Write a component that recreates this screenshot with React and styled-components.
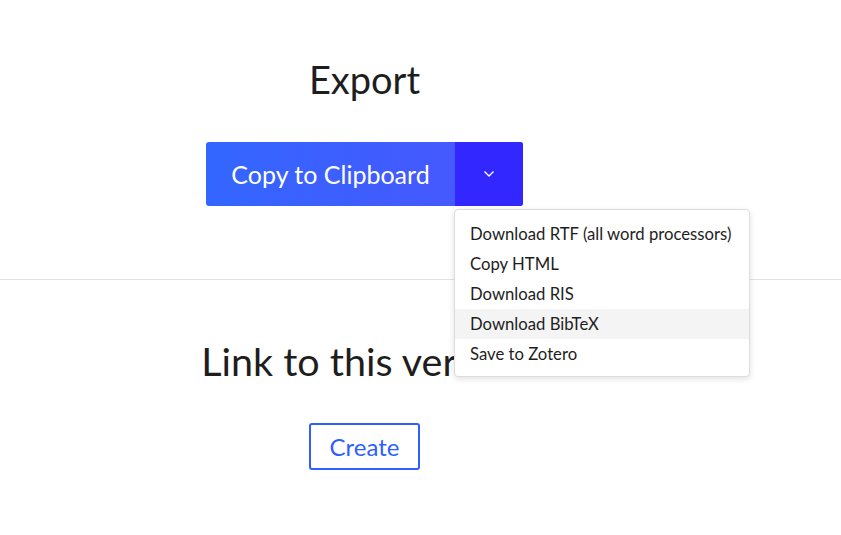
import React from "react";
import styled, { createGlobalStyle } from "styled-components";

const Global = createGlobalStyle`
  html, body { margin: 0; padding: 0; background: #fff; }
  body { font-family: Lato, "Noto Sans", sans-serif; color: #222; }
`;

const Page = styled.div`
  width: 841px;
  height: 535px;
  overflow: hidden;
  position: relative;
`;

const Section = styled.section`
  width: 729px;
  display: flex;
  flex-direction: column;
  align-items: center;
  padding-top: ${(p) => p.$top}px;
  padding-bottom: ${(p) => p.$bottom}px;
`;

const Heading = styled.h2`
  margin: 0;
  font-family: Lato, sans-serif;
  font-weight: 400;
  font-size: ${(p) => p.$size || 38}px;
  line-height: 46px;
  color: #1e1e1e;
`;

const Divider = styled.hr`
  margin: 0;
  border: 0;
  border-top: 1px solid #e2e2e2;
  width: 100%;
`;

const SplitWrap = styled.div`
  position: relative;
  margin-top: 40px;
`;

const Split = styled.div`
  display: flex;
  height: 64px;
  border-radius: 3px;
  overflow: hidden;
  background: linear-gradient(90deg, #3366ff 0%, #4a55ff 100%);
`;

const MainButton = styled.button`
  border: 0;
  background: transparent;
  color: #fff;
  font-family: Lato, sans-serif;
  font-size: 25px;
  font-weight: 400;
  width: 249px;
  padding: 0;
  cursor: pointer;
`;

const Caret = styled.button`
  border: 0;
  width: 68px;
  background: #3228ff;
  display: flex;
  align-items: center;
  justify-content: center;
  padding: 0;
  cursor: pointer;
`;

const Menu = styled.ul`
  position: absolute;
  left: 248px;
  top: 67px;
  width: 294px;
  margin: 0;
  padding: 9px 0 7px;
  list-style: none;
  background: #fff;
  border: 1px solid #dcdcdc;
  border-radius: 4px;
  box-shadow: 0 2px 6px rgba(0, 0, 0, 0.12);
  z-index: 2;
`;

const Item = styled.li`
  height: 30px;
  line-height: 30px;
  padding: 0 15px;
  font-size: 16.7px;
  color: #1e1e1e;
  white-space: nowrap;
  background: ${(p) => (p.$active ? "#f4f4f4" : "transparent")};
`;

const OutlineButton = styled.button`
  margin-top: 39px;
  width: 111px;
  height: 47px;
  border: 2px solid #2f5fff;
  border-radius: 3px;
  background: #fff;
  color: #2f5fff;
  font-family: Lato, sans-serif;
  font-size: 24px;
  padding: 0;
`;

const items = [
  "Download RTF (all word processors)",
  "Copy HTML",
  "Download RIS",
  "Download BibTeX",
  "Save to Zotero",
];

export default function App() {
  return (
    <Page>
      <Global />
      <Section $top={56} $bottom={73}>
        <Heading $size={38}>Export</Heading>
        <SplitWrap>
          <Split>
            <MainButton>Copy to Clipboard</MainButton>
            <Caret aria-label="More options">
              <svg width="12" height="8" viewBox="0 0 12 8" fill="none">
                <path d="M1.5 1.5 L6 6 L10.5 1.5" stroke="#fff" strokeWidth="1.3" />
              </svg>
            </Caret>
          </Split>
          <Menu>
            {items.map((t) => (
              <Item key={t} $active={t === "Download BibTeX"}>
                {t}
              </Item>
            ))}
          </Menu>
        </SplitWrap>
      </Section>
      <Divider />
      <Section $top={58} $bottom={0}>
        <Heading $size={39.5}>Link to this version</Heading>
        <OutlineButton>Create</OutlineButton>
      </Section>
    </Page>
  );
}
